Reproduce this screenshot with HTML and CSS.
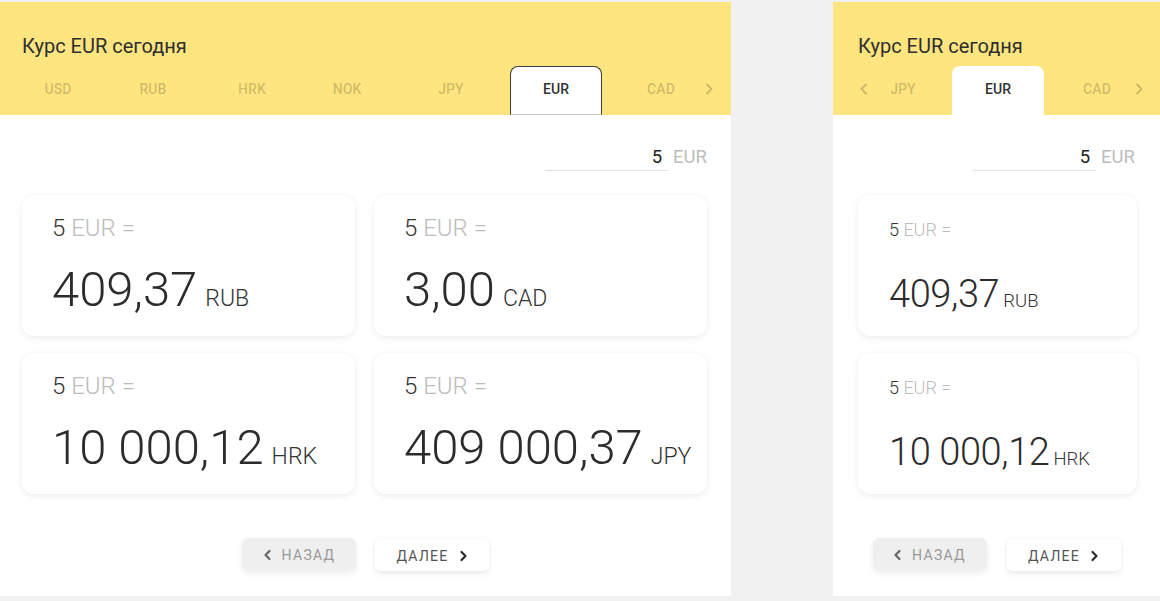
FILE: index.html
```html
<!DOCTYPE html>
<html lang="ru">
<head>
<meta charset="utf-8">
<title>Курс EUR сегодня</title>
<link rel="stylesheet" href="styles.css">
</head>
<body>
<div class="page">
  <section class="panel panel-wide">
    <header class="head">
      <h1 class="title">Курс EUR сегодня</h1>
      <nav class="tabs tabs-wide">
        <span class="tab">USD</span>
        <span class="tab">RUB</span>
        <span class="tab">HRK</span>
        <span class="tab">NOK</span>
        <span class="tab">JPY</span>
        <span class="tab tab-active tab-focus">EUR</span>
        <span class="tab">CAD</span>
        <span class="tab-arrow tab-arrow-right"><svg width="8" height="12" viewBox="0 0 8 12"><polyline points="2,1.5 6.5,6 2,10.5" fill="none" stroke="currentColor" stroke-width="1.8" stroke-linecap="round" stroke-linejoin="round"/></svg></span>
      </nav>
    </header>
    <div class="amount">
      <div class="amount-input">5</div>
      <span class="amount-cur">EUR</span>
    </div>
    <div class="cards cards-two">
      <div class="card">
        <div class="card-from"><span class="num">5</span> <span class="muted">EUR =</span></div>
        <div class="card-value"><span class="big">409,37</span><span class="cur">RUB</span></div>
      </div>
      <div class="card">
        <div class="card-from"><span class="num">5</span> <span class="muted">EUR =</span></div>
        <div class="card-value"><span class="big">3,00</span><span class="cur">CAD</span></div>
      </div>
      <div class="card">
        <div class="card-from"><span class="num">5</span> <span class="muted">EUR =</span></div>
        <div class="card-value"><span class="big">10 000,12</span><span class="cur">HRK</span></div>
      </div>
      <div class="card">
        <div class="card-from"><span class="num">5</span> <span class="muted">EUR =</span></div>
        <div class="card-value"><span class="big">409 000,37</span><span class="cur">JPY</span></div>
      </div>
    </div>
    <div class="pager">
      <button class="btn btn-back"><svg width="9" height="12" viewBox="0 0 9 12"><polyline points="6.5,2 2.5,6 6.5,10" fill="none" stroke="currentColor" stroke-width="2.2" stroke-linecap="round" stroke-linejoin="round"/></svg><span>НАЗАД</span></button>
      <button class="btn btn-next"><span>ДАЛЕЕ</span><svg width="9" height="12" viewBox="0 0 9 12"><polyline points="2.5,2 6.5,6 2.5,10" fill="none" stroke="currentColor" stroke-width="2.2" stroke-linecap="round" stroke-linejoin="round"/></svg></button>
    </div>
  </section>

  <section class="panel panel-narrow">
    <header class="head head-narrow">
      <h1 class="title">Курс EUR сегодня</h1>
      <nav class="tabs tabs-narrow">
        <span class="tab-arrow tab-arrow-left"><svg width="8" height="12" viewBox="0 0 8 12"><polyline points="6,1.5 1.5,6 6,10.5" fill="none" stroke="currentColor" stroke-width="1.8" stroke-linecap="round" stroke-linejoin="round"/></svg></span>
        <span class="tab">JPY</span>
        <span class="tab tab-active">EUR</span>
        <span class="tab">CAD</span>
        <span class="tab-arrow tab-arrow-right-n"><svg width="8" height="12" viewBox="0 0 8 12"><polyline points="2,1.5 6.5,6 2,10.5" fill="none" stroke="currentColor" stroke-width="1.8" stroke-linecap="round" stroke-linejoin="round"/></svg></span>
      </nav>
    </header>
    <div class="amount">
      <div class="amount-input">5</div>
      <span class="amount-cur">EUR</span>
    </div>
    <div class="cards cards-one">
      <div class="card card-small">
        <div class="card-from"><span class="num">5</span> <span class="muted">EUR =</span></div>
        <div class="card-value"><span class="big">409,37</span><span class="cur">RUB</span></div>
      </div>
      <div class="card card-small">
        <div class="card-from"><span class="num">5</span> <span class="muted">EUR =</span></div>
        <div class="card-value"><span class="big">10 000,12</span><span class="cur">HRK</span></div>
      </div>
    </div>
    <div class="pager">
      <button class="btn btn-back"><svg width="9" height="12" viewBox="0 0 9 12"><polyline points="6.5,2 2.5,6 6.5,10" fill="none" stroke="currentColor" stroke-width="2.2" stroke-linecap="round" stroke-linejoin="round"/></svg><span>НАЗАД</span></button>
      <button class="btn btn-next"><span>ДАЛЕЕ</span><svg width="9" height="12" viewBox="0 0 9 12"><polyline points="2.5,2 6.5,6 2.5,10" fill="none" stroke="currentColor" stroke-width="2.2" stroke-linecap="round" stroke-linejoin="round"/></svg></button>
    </div>
  </section>
</div>
</body>
</html>
```

FILE: styles.css
```css
* { box-sizing: border-box; }

html, body {
  margin: 0;
  padding: 0;
  background: #f1f1f1;
  font-family: Roboto, "Noto Sans", Arial, sans-serif;
  color: #333;
  overflow: hidden;
}

.page {
  display: flex;
  gap: 102px;
  padding-top: 2px;
  height: 601px;
}

.panel {
  background: #fff;
  height: 594px;
  display: flex;
  flex-direction: column;
  overflow: hidden;
}

.panel-wide { width: 731px; }
.panel-narrow { width: 327px; }

.head {
  background: #ffe580;
  height: 113px;
  display: flex;
  flex-direction: column;
  justify-content: space-between;
  position: relative;
}

.title {
  margin: 0;
  padding: 32px 22px 0;
  font-size: 20px;
  line-height: 24px;
  font-weight: 400;
  color: #2e2e2e;
}

.head-narrow .title { padding-left: 25px; }

.tabs {
  display: grid;
  height: 49px;
  position: relative;
}

.tabs-wide {
  padding-left: 12px;
  grid-template-columns: 92px 98px 100px 90px 118px 92px 118px;
}

.tabs-narrow {
  padding-left: 27px;
  grid-template-columns: 86px 92px 94px;
  column-gap: 6px;
}

.tab {
  display: flex;
  align-items: center;
  justify-content: center;
  padding-bottom: 4px;
  font-size: 14px;
  font-weight: 500;
  color: rgba(0, 0, 0, 0.2);
  letter-spacing: 0.1px;
}

.tab-active {
  background: #fff;
  color: #333;
  border-radius: 8px 8px 0 0;
}

.tab-focus {
  border: 1px solid #3c3c3c;
  border-bottom: 1px solid #c4c4c4;
}

.tab-arrow {
  position: absolute;
  top: 0;
  height: 45px;
  display: flex;
  align-items: center;
  color: rgba(0, 0, 0, 0.2);
}

.tab-arrow-right { left: 705px; }
.tab-arrow-left { left: 27px; }
.tab-arrow-right-n { left: 302px; }

.amount {
  display: flex;
  justify-content: flex-end;
  align-items: baseline;
  gap: 5px;
  padding: 32px 24px 24px 0;
}

.panel-narrow .amount { padding-right: 25px; }

.amount-input {
  width: 123px;
  text-align: right;
  padding: 0 6px 3px 0;
  border-bottom: 1px solid #e2e2e2;
  font-size: 18.5px;
  line-height: 20px;
  color: #222;
}

.amount-cur {
  font-size: 18.5px;
  line-height: 20px;
  color: #bdbdbd;
}

.cards {
  display: grid;
  row-gap: 17px;
  column-gap: 19px;
}

.cards-two {
  grid-template-columns: minmax(0, 1fr) minmax(0, 1fr);
  padding: 0 24px 0 22px;
}

.cards-one {
  grid-template-columns: minmax(0, 1fr);
  padding: 0 23px 0 25px;
}

.card {
  height: 141px;
  background: #fff;
  border-radius: 12px;
  box-shadow: 0 2px 7px rgba(0, 0, 0, 0.07), 0 0 2px rgba(0, 0, 0, 0.03);
  padding: 19px 10px 0 30px;
  font-weight: 300;
  white-space: nowrap;
  min-width: 0;
}

.card-from {
  font-size: 24px;
  line-height: 28px;
}

.card-from .num { color: #333; }
.muted { color: #bcbcbc; }

.card-value {
  margin-top: 19px;
  line-height: 58px;
  display: flex;
  align-items: baseline;
}

.big {
  font-size: 49px;
  color: #2c2c2c;
}

.cur {
  font-size: 23px;
  margin-left: 8px;
  color: #333;
}

.card-small {
  padding: 24px 10px 0 31px;
}

.card-small .card-from {
  font-size: 18px;
  line-height: 22px;
}

.card-small .card-value {
  margin-top: 30px;
  line-height: 46px;
}

.card-small .big {
  font-size: 38px;
  letter-spacing: -0.4px;
}

.card-small .cur {
  font-size: 18.5px;
  margin-left: 4px;
}

.pager {
  display: flex;
  justify-content: center;
  gap: 19px;
  margin-top: 44px;
}

.panel-narrow .pager { gap: 20px; }

.btn {
  width: 114px;
  height: 32px;
  border: none;
  border-radius: 6px;
  display: flex;
  align-items: center;
  justify-content: center;
  gap: 10px;
  font-family: Roboto, "Noto Sans", Arial, sans-serif;
  font-size: 14px;
  font-weight: 400;
  letter-spacing: 1.3px;
  padding: 2px 0 0;
}

.btn-back {
  background: #efefef;
  color: #999;
  box-shadow: 0 3px 6px rgba(0, 0, 0, 0.08);
}

.btn-back svg { color: #666; }

.btn-next {
  background: #fff;
  color: #555;
  margin-top: 1px;
  box-shadow: 0 2px 6px rgba(0, 0, 0, 0.1);
}

.btn-next svg { color: #2a2a2a; }
```
